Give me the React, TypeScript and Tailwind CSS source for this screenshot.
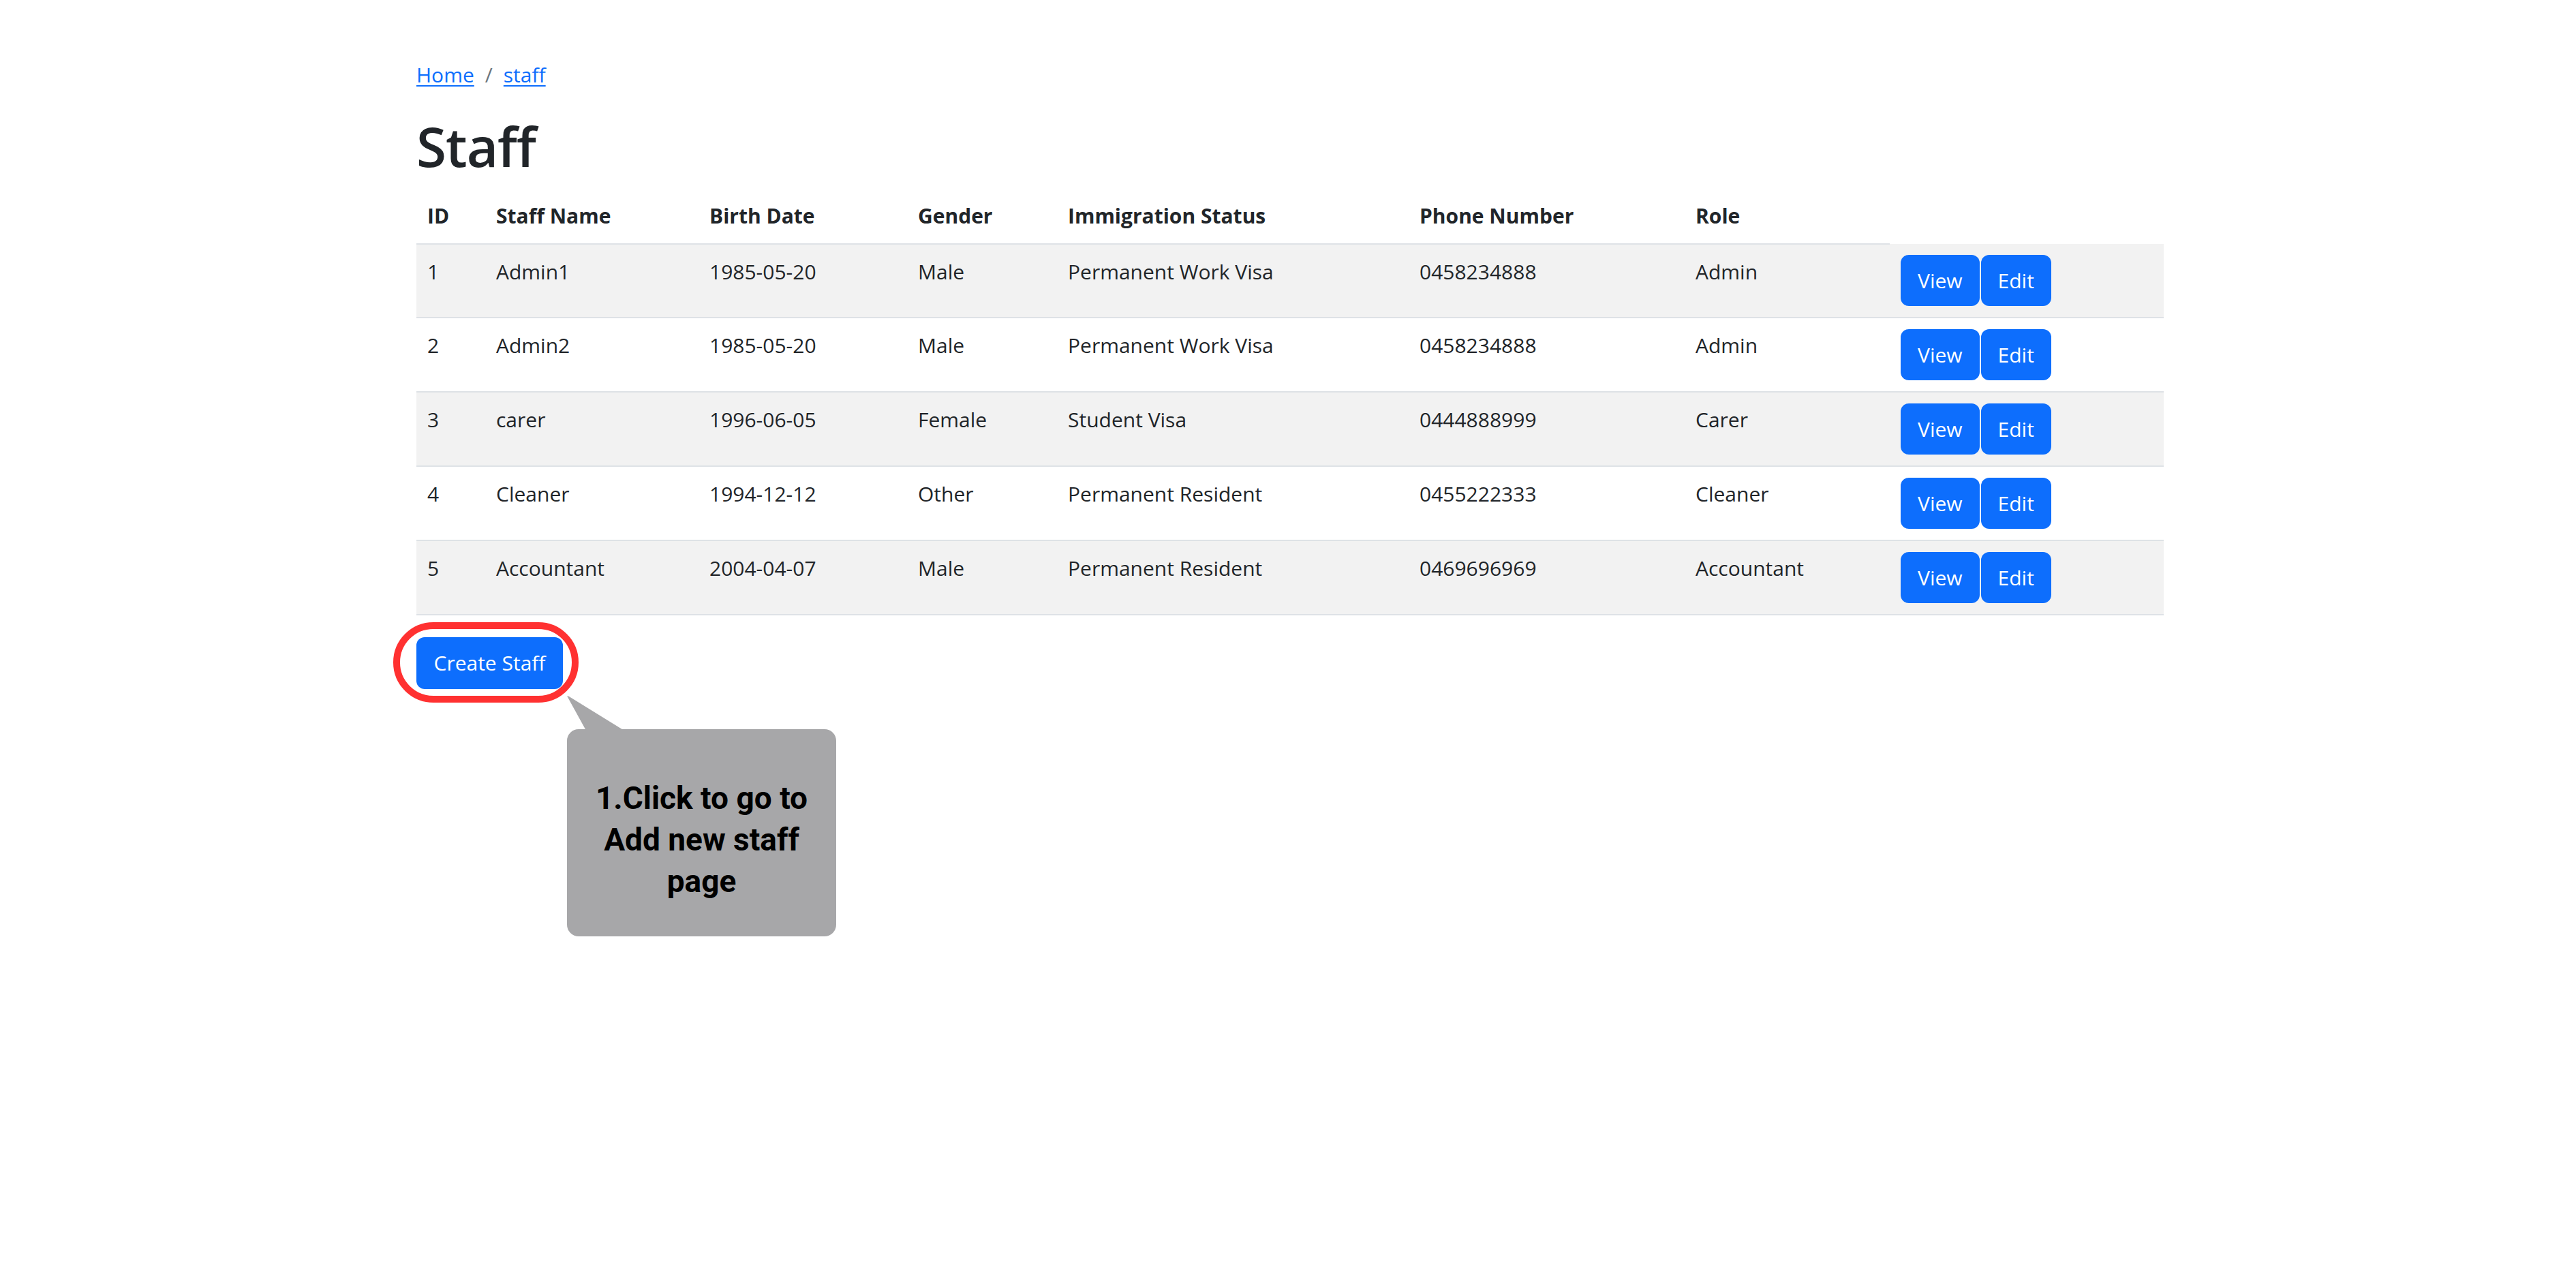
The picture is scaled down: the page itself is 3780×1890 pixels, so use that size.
import React from "react";

type Staff = {
    id: number;
    name: string;
    birth: string;
    gender: string;
    status: string;
    phone: string;
    role: string;
};

const staffList: Staff[] = [
    { id: 1, name: "Admin1", birth: "1985-05-20", gender: "Male", status: "Permanent Work Visa", phone: "0458234888", role: "Admin" },
    { id: 2, name: "Admin2", birth: "1985-05-20", gender: "Male", status: "Permanent Work Visa", phone: "0458234888", role: "Admin" },
    { id: 3, name: "carer", birth: "1996-06-05", gender: "Female", status: "Student Visa", phone: "0444888999", role: "Carer" },
    { id: 4, name: "Cleaner", birth: "1994-12-12", gender: "Other", status: "Permanent Resident", phone: "0455222333", role: "Cleaner" },
    { id: 5, name: "Accountant", birth: "2004-04-07", gender: "Male", status: "Permanent Resident", phone: "0469696969", role: "Accountant" },
];

const headers = ["ID", "Staff Name", "Birth Date", "Gender", "Immigration Status", "Phone Number", "Role"];

function RowButton({ label }: { label: string }) {
    return (
        <button className="h-[75px] px-[25px] rounded-[12px] bg-[#0d6efd] text-white text-[30px] leading-[48px]">
            {label}
        </button>
    );
}

export default function App() {
    return (
        <div className="min-h-screen w-full bg-white text-[#212529] font-['Open_Sans',sans-serif]">
            <div className="ml-[611px] w-[2564px] pt-[86px]">
                {/* breadcrumb */}
                <nav className="flex items-center text-[30px] leading-[48px]">
                    <a href="#" className="text-[#0d6efd] underline underline-offset-[4px] decoration-2">Home</a>
                    <span className="px-[16px] text-[#6c757d]">/</span>
                    <a href="#" className="text-[#0d6efd] underline underline-offset-[4px] decoration-2">staff</a>
                </nav>

                <h1 className="mt-[32px] mb-[15px] text-[80px] leading-[96px] font-semibold tracking-[-1px]">Staff</h1>

                {/* table */}
                <table className="w-[2564px] table-fixed text-[30px] leading-[48px]">
                    <colgroup>
                        <col className="w-[101px]" />
                        <col className="w-[313px]" />
                        <col className="w-[306px]" />
                        <col className="w-[220px]" />
                        <col className="w-[516px]" />
                        <col className="w-[405px]" />
                        <col className="w-[301px]" />
                        <col className="w-[402px]" />
                    </colgroup>
                    <thead>
                        <tr>
                            {headers.map((h) => (
                                <th key={h} className="p-[16px] text-left align-top font-bold border-b-2 border-[#dee2e6]">
                                    {h}
                                </th>
                            ))}
                            <th className="p-[16px]"></th>
                        </tr>
                    </thead>
                    <tbody>
                        {staffList.map((s, i) => (
                            <tr key={s.id} className={i % 2 === 0 ? "bg-[#f2f2f2]" : "bg-white"}>
                                <td className="p-[16px] align-top border-b-2 border-[#dee2e6]">{s.id}</td>
                                <td className="p-[16px] align-top border-b-2 border-[#dee2e6]">{s.name}</td>
                                <td className="p-[16px] align-top border-b-2 border-[#dee2e6]">{s.birth}</td>
                                <td className="p-[16px] align-top border-b-2 border-[#dee2e6]">{s.gender}</td>
                                <td className="p-[16px] align-top border-b-2 border-[#dee2e6]">{s.status}</td>
                                <td className="p-[16px] align-top border-b-2 border-[#dee2e6]">{s.phone}</td>
                                <td className="p-[16px] align-top border-b-2 border-[#dee2e6]">{s.role}</td>
                                <td className="p-[16px] align-top border-b-2 border-[#dee2e6]">
                                    <div className="flex gap-[2px]">
                                        <RowButton label="View" />
                                        <RowButton label="Edit" />
                                    </div>
                                </td>
                            </tr>
                        ))}
                    </tbody>
                </table>

                {/* create button + annotation */}
                <div className="relative mt-[32px] w-[215px]">
                    <button className="h-[76px] w-[215px] rounded-[12px] bg-[#0d6efd] text-white text-[30px] leading-[48px]">
                        Create Staff
                    </button>

                    {/* red highlight ring */}
                    <div className="absolute left-[-34px] top-[-22px] w-[272px] h-[118px] rounded-[59px] border-[10px] border-[#ff3131]" />

                    {/* callout tail */}
                    <svg className="absolute left-[215px] top-[82px]" width="100" height="60" viewBox="0 0 100 60">
                        <path d="M7 6 Q5 3 9 5 L90 55 L34 55 Z" fill="#a7a7a9" />
                    </svg>

                    {/* callout box */}
                    <div className="absolute left-[221px] top-[135px] w-[395px] h-[304px] rounded-[17px] bg-[#a7a7a9] flex items-center justify-center pt-[21px]">
                        <p className="text-center text-black font-bold text-[46px] leading-[61px] font-['Roboto',sans-serif]">
                            1.Click to go to
                            <br />
                            Add new staff
                            <br />
                            page
                        </p>
                    </div>
                </div>
            </div>
        </div>
    );
}
